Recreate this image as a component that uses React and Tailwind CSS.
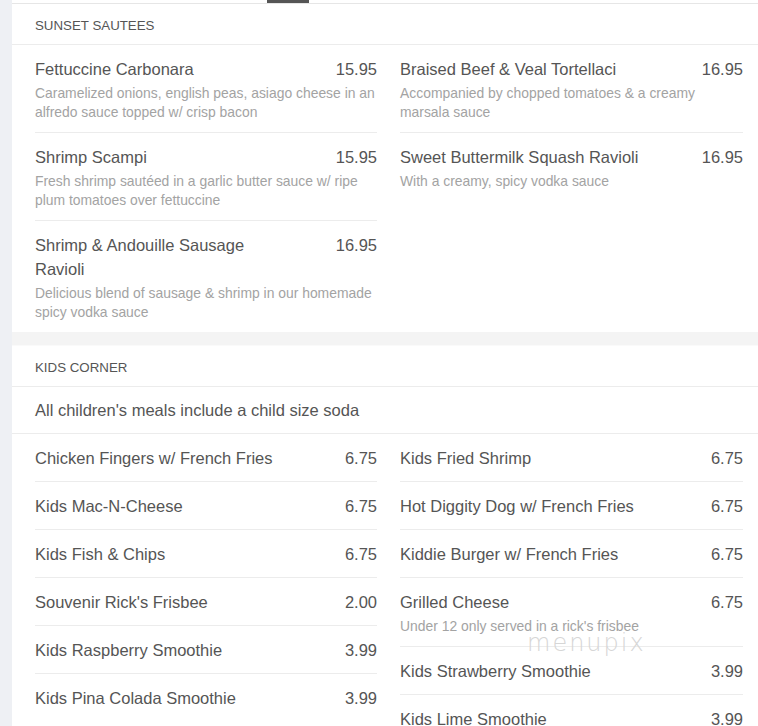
import React from 'react'

const FONT = { fontFamily: '"Liberation Sans", Arial, sans-serif' }

const sautees = [
  [
    { name: 'Fettuccine Carbonara', price: '15.95', desc: 'Caramelized onions, english peas, asiago cheese in an alfredo sauce topped w/ crisp bacon' },
    { name: 'Shrimp Scampi', price: '15.95', desc: 'Fresh shrimp sautéed in a garlic butter sauce w/ ripe plum tomatoes over fettuccine' },
    { name: 'Shrimp & Andouille Sausage Ravioli', price: '16.95', desc: 'Delicious blend of sausage & shrimp in our homemade spicy vodka sauce' },
  ],
  [
    { name: 'Braised Beef & Veal Tortellaci', price: '16.95', desc: 'Accompanied by chopped tomatoes & a creamy marsala sauce' },
    { name: 'Sweet Buttermilk Squash Ravioli', price: '16.95', desc: 'With a creamy, spicy vodka sauce' },
  ],
]

const kids = [
  [
    { name: 'Chicken Fingers w/ French Fries', price: '6.75' },
    { name: 'Kids Mac-N-Cheese', price: '6.75' },
    { name: 'Kids Fish & Chips', price: '6.75' },
    { name: "Souvenir Rick's Frisbee", price: '2.00' },
    { name: 'Kids Raspberry Smoothie', price: '3.99' },
    { name: 'Kids Pina Colada Smoothie', price: '3.99' },
  ],
  [
    { name: 'Kids Fried Shrimp', price: '6.75' },
    { name: 'Hot Diggity Dog w/ French Fries', price: '6.75' },
    { name: 'Kiddie Burger w/ French Fries', price: '6.75' },
    { name: 'Grilled Cheese', price: '6.75', desc: "Under 12 only served in a rick's frisbee" },
    { name: 'Kids Strawberry Smoothie', price: '3.99' },
    { name: 'Kids Lime Smoothie', price: '3.99' },
  ],
]

function Item({ item, last }) {
  return (
    <div className={`pt-3 ${item.desc ? 'pb-[10px]' : 'pb-[11px]'} ${last ? '' : 'border-b border-[#ececec]'}`}>
      <div className="flex items-start justify-between gap-4 text-[16.5px] leading-6 text-[#555]">
        <span className="max-w-[250px]">{item.name}</span>
        <span className="shrink-0">{item.price}</span>
      </div>
      {item.desc && (
        <p className="mt-[3px] text-[13.9px] leading-[19px] text-[#a3a3a3]">{item.desc}</p>
      )}
    </div>
  )
}

function Columns({ cols }) {
  return (
    <div className="grid grid-cols-[342px_343px] gap-x-[23px] px-[23px]">
      {cols.map((col, ci) => (
        <div key={ci}>
          {col.map((it, i) => <Item key={it.name} item={it} last={i === col.length - 1} />)}
        </div>
      ))}
    </div>
  )
}

function Header({ title }) {
  return (
    <div className="flex h-[41px] items-center border-b border-[#ececec] px-[23px] pt-1 text-[13.3px] uppercase text-[#555]">
      {title}
    </div>
  )
}

export default function App() {
  return (
    <div className="flex h-[726px] w-[758px] overflow-hidden bg-[#eef0f4]" style={FONT}>
      <div className="w-3 shrink-0" />
      <div className="relative w-[754px] shrink-0 bg-white">
        {/* tab bar edge */}
        <div className="h-[4px] border-b border-[#e6e6e6]">
          <div className="ml-[255px] h-[3px] w-[42px] bg-[#555]" />
        </div>

        <Header title="Sunset Sautees" />
        <Columns cols={sautees} />

        <div className="h-[14px] border-b border-[#fafafa] bg-[#f4f4f4]" />

        <Header title="Kids Corner" />
        <div className="border-b border-[#ececec] px-[23px] py-[11px] text-[16.5px] leading-6 text-[#555]">
          All children's meals include a child size soda
        </div>
        <Columns cols={kids} />

        <div
          className="pointer-events-none absolute left-[515px] top-[631px] text-[24px] font-extralight leading-6 tracking-[2px] text-[#d6d6d6]"
          style={{ fontFamily: '"DejaVu Sans", sans-serif' }}
        >
          menupix
        </div>
      </div>
    </div>
  )
}
